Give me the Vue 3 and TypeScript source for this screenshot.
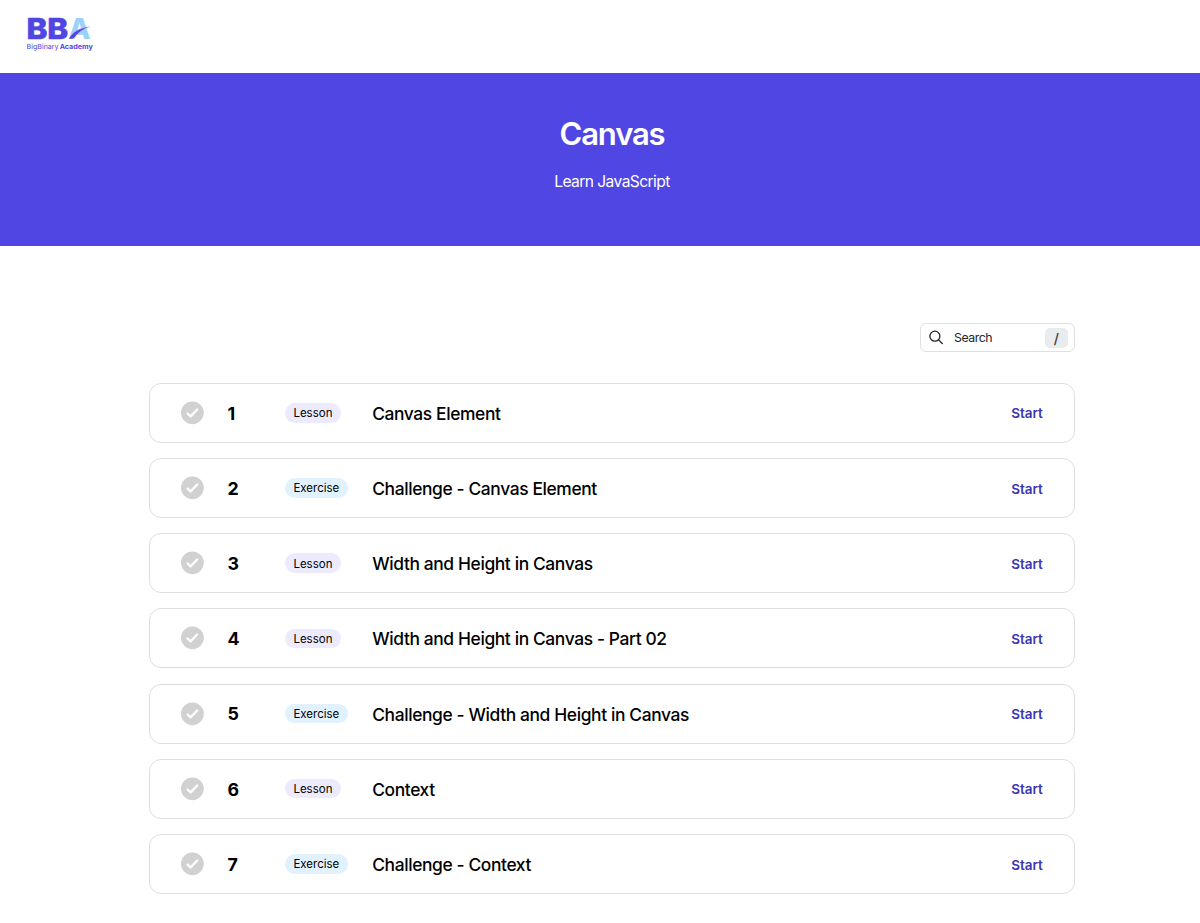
<script setup lang="ts">
interface Unit {
  id: number
  kind: 'Lesson' | 'Exercise'
  title: string
}

const units: Unit[] = [
  { id: 1, kind: 'Lesson', title: 'Canvas Element' },
  { id: 2, kind: 'Exercise', title: 'Challenge - Canvas Element' },
  { id: 3, kind: 'Lesson', title: 'Width and Height in Canvas' },
  { id: 4, kind: 'Lesson', title: 'Width and Height in Canvas - Part 02' },
  { id: 5, kind: 'Exercise', title: 'Challenge - Width and Height in Canvas' },
  { id: 6, kind: 'Lesson', title: 'Context' },
  { id: 7, kind: 'Exercise', title: 'Challenge - Context' },
]
</script>

<template>
  <div class="page">
    <header class="topbar">
      <svg class="logo" width="70" height="44" viewBox="0 -4 70 44" role="img" aria-label="BigBinary Academy">
        <text class="logo-a" x="42.2" y="25.5" textLength="22.4" lengthAdjust="spacingAndGlyphs">A</text>
        <text class="logo-bb" x="0.4" y="25.5" textLength="41.8" lengthAdjust="spacingAndGlyphs">BB</text>
        <path d="M42.7 25.9C46 19.4 53.5 14.6 64.3 13.6C57.5 16.2 52.3 19.4 48.3 24.8C47.2 26.1 44.5 26.1 42.7 25.9Z" fill="#5046e4" stroke="#fff" stroke-width=".3" />
        <text class="logo-small" x="0.6" y="36" textLength="32" lengthAdjust="spacingAndGlyphs">BigBinary</text>
        <text class="logo-small strong" x="33.7" y="36" textLength="33" lengthAdjust="spacingAndGlyphs">Academy</text>
      </svg>
    </header>

    <section class="hero">
      <h1>Canvas</h1>
      <p>Learn JavaScript</p>
    </section>

    <main class="content">
      <label class="search">
        <svg width="16" height="16" viewBox="0 0 16 16" fill="none" stroke="#212529" stroke-width="1.3" stroke-linecap="round">
          <circle cx="6.9" cy="6.2" r="5" />
          <path d="M10.6 9.9L14.3 13.5" />
        </svg>
        <span class="search-text">Search</span>
        <kbd>/</kbd>
      </label>

      <ul class="units">
        <li v-for="unit in units" :key="unit.id" class="unit">
          <svg class="check" width="24" height="24" viewBox="0 0 24 24" fill="none">
            <circle cx="12.4" cy="11.8" r="11.4" fill="#d1d1d1" />
            <path d="M7.6 12.5L10.6 15.4L17.2 8.5" stroke="#fff" stroke-width="2.3" stroke-linecap="round" stroke-linejoin="round" />
          </svg>
          <span class="number">{{ unit.id }}</span>
          <span class="kind"><span class="badge" :class="unit.kind.toLowerCase()">{{ unit.kind }}</span></span>
          <span class="title">{{ unit.title }}</span>
          <a class="start">Start</a>
        </li>
      </ul>
    </main>
  </div>
</template>

<style>
body {
  background: #fff;
  overflow: hidden;
}
</style>

<style scoped>
.page {
  height: 923px;
  overflow: hidden;
  background: #fff;
  font-family: Inter, "Liberation Sans", sans-serif;
  color: #000;
}

.topbar {
  box-sizing: border-box;
  height: 73.4px;
  padding: 9px 0 0 26px;
}

.logo {
  display: block;
  overflow: visible;
}

.logo-bb,
.logo-a {
  font-size: 29px;
  font-weight: 800;
  fill: #5046e4;
  stroke: #5046e4;
  stroke-width: 0.6px;
}

.logo-a {
  fill: #9bd2fb;
  stroke: none;
}

.logo-small {
  font-size: 6.8px;
  font-weight: 400;
  fill: #5046e4;
}

.strong {
  font-weight: 700;
}

.hero {
  box-sizing: border-box;
  height: 172.6px;
  padding: 40.6px 0 0 24px;
  background: #5046e4;
  color: #fff;
  text-align: center;
}

h1 {
  margin: 0;
  font-size: 31px;
  font-weight: 600;
  line-height: 40px;
  letter-spacing: -1.15px;
}

.hero p {
  margin: 16.4px 0 0;
  font-size: 15.6px;
  line-height: 24px;
  letter-spacing: -0.58px;
}

.content {
  display: flex;
  flex-direction: column;
  align-items: flex-end;
  width: 925.5px;
  margin: 77px 0 0 149.4px;
}

.search {
  display: flex;
  align-items: center;
  box-sizing: border-box;
  width: 155px;
  height: 29.5px;
  padding: 0 6px 0 7.5px;
  border: 1px solid #dfe0e2;
  border-radius: 6px;
}

.search-text {
  flex: 1;
  margin-left: 9.6px;
  font-size: 12.3px;
  letter-spacing: -0.45px;
  line-height: 16px;
  padding-top: 1px;
  color: #212529;
}

kbd {
  width: 23px;
  height: 20px;
  border-radius: 5px;
  background: #e9ecef;
  font: 500 14px/21px Inter, "Liberation Sans", sans-serif;
  text-align: center;
  color: #343a40;
}

.units {
  display: flex;
  flex-direction: column;
  gap: 15.2px;
  align-self: stretch;
  margin: 30.3px 0 0;
  padding: 0;
  list-style: none;
}

.unit {
  display: flex;
  align-items: center;
  box-sizing: border-box;
  height: 60px;
  padding: 0 31px 0 30px;
  border: 1px solid #dedee0;
  border-radius: 12px;
}

.check {
  flex: none;
}

.number {
  width: 57.5px;
  margin-left: 23px;
  padding-top: 1.6px;
  font-size: 17.8px;
  line-height: 22px;
  font-weight: 650;
}

.kind {
  width: 87.3px;
  display: flex;
}

.badge {
  padding: 1.2px 8.5px 0;
  border-radius: 10px;
  font-size: 11.5px;
  line-height: 18.3px;
}

.lesson {
  background: #ebebfd;
}

.exercise {
  background: #e1f2fe;
}

.title {
  flex: 1;
  padding-top: 2px;
  font-size: 17.4px;
  line-height: 22px;
  font-weight: 500;
  letter-spacing: -0.38px;
}

.start {
  padding-top: 1.2px;
  font-size: 13.5px;
  line-height: 18px;
  font-weight: 600;
  color: #3c36b2;
}
</style>
